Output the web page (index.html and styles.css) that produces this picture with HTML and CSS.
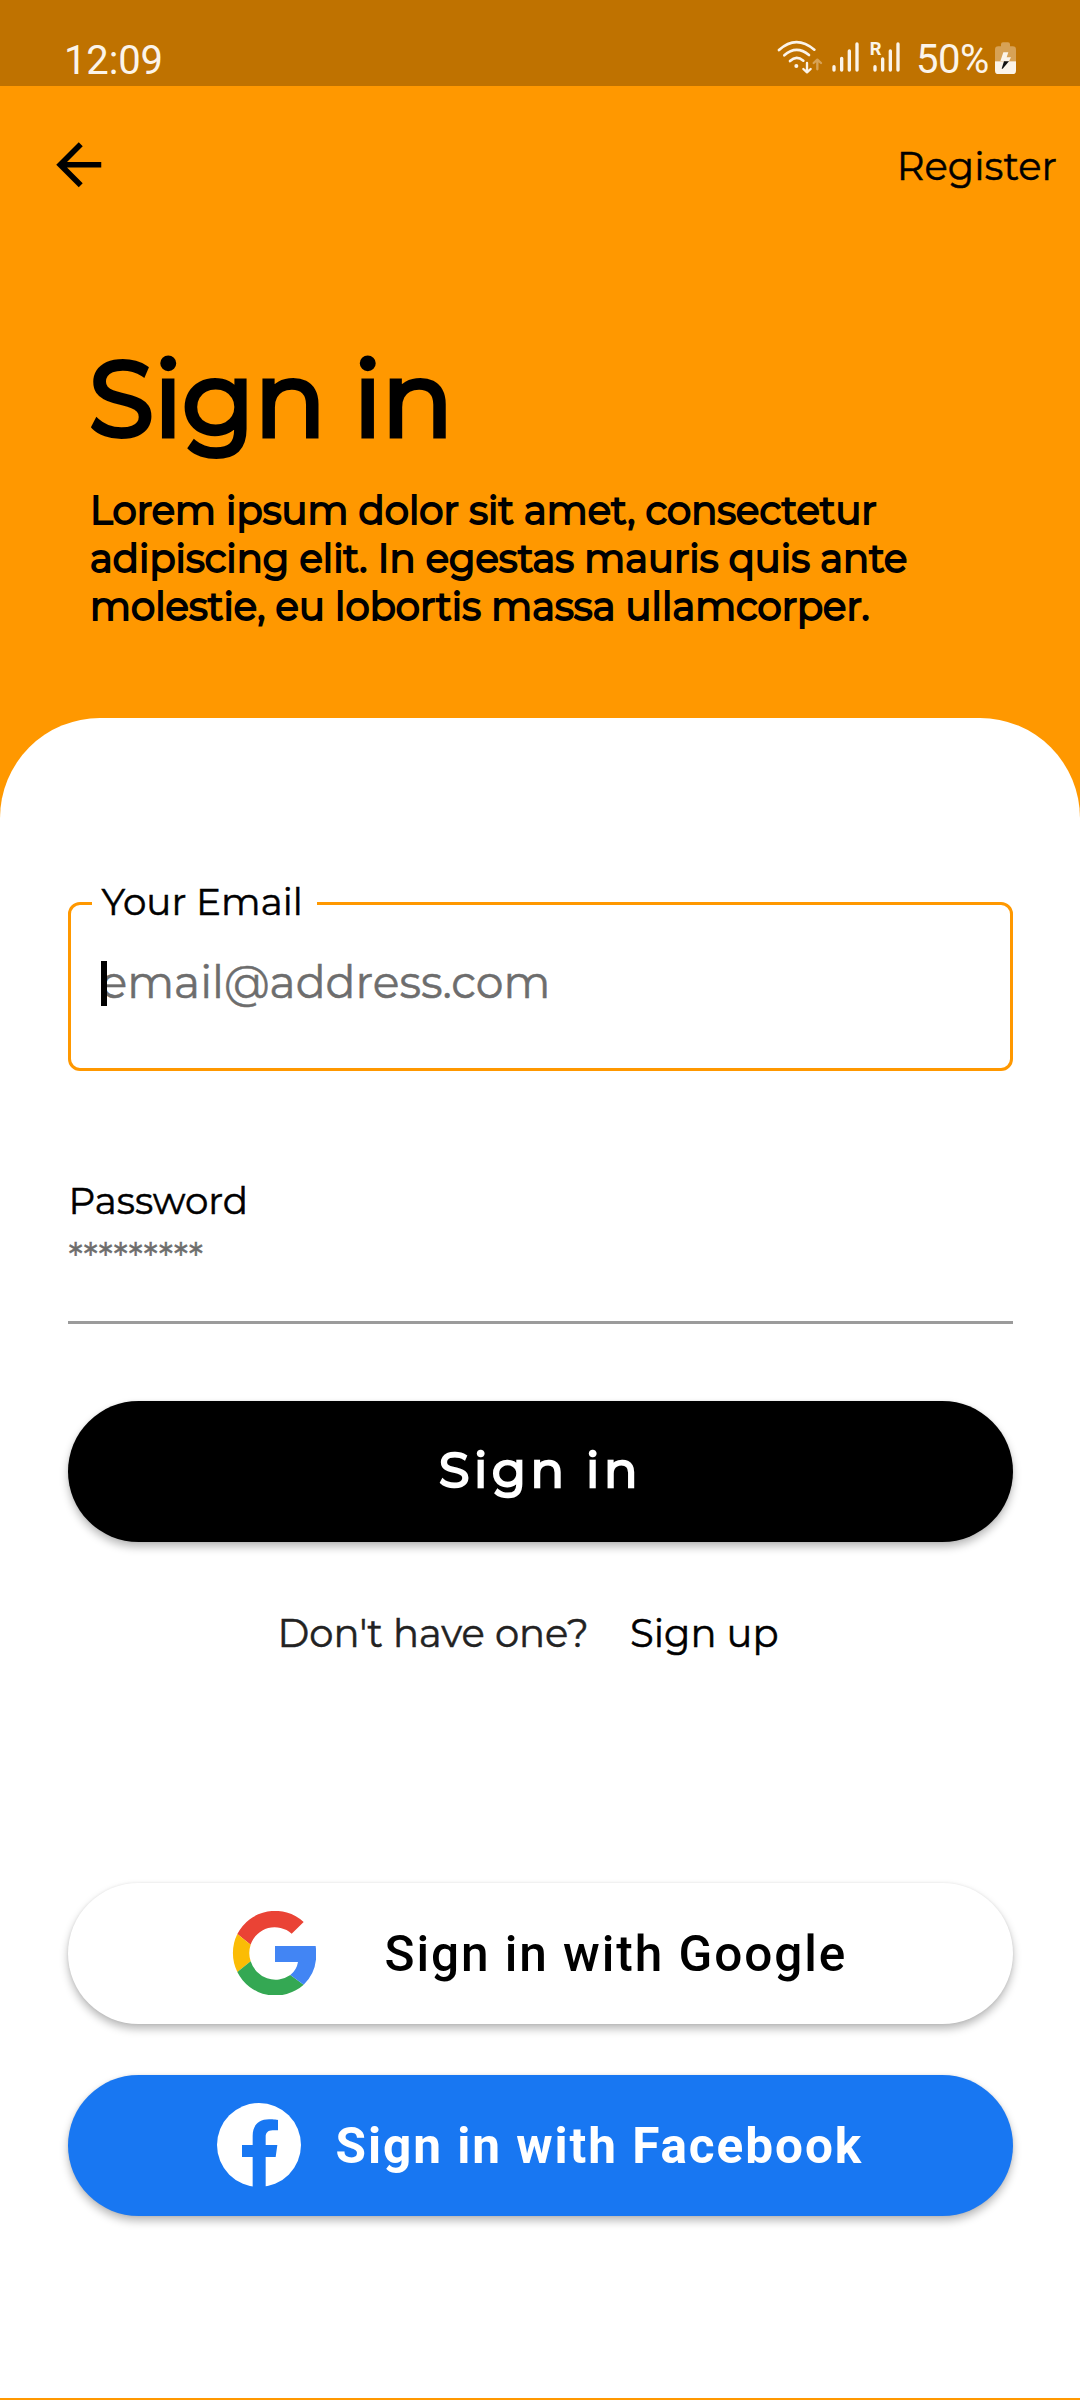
FILE: index.html
```html
<!DOCTYPE html>
<html lang="en">
<head>
<meta charset="utf-8">
<title>Sign in</title>
<link rel="stylesheet" href="styles.css">
</head>
<body>
<div class="status-bar">
  <span class="clock">12:09</span>
  <svg class="signals" viewBox="108 115 378 115" fill="none" stroke="#fbf4ea" stroke-linecap="round">
    <g stroke-width="8">
      <path d="M117 151Q168 104 223 150"/>
      <path d="M133 167Q169 135 207 166"/>
      <path d="M150 184Q169 166 190 183"/>
    </g>
    <circle cx="169" cy="199" r="6" fill="#fbf4ea" stroke="none"/>
    <path stroke-width="7" stroke-linejoin="round" d="M201 190V217M190 208L201 218L212 208"/>
    <path stroke="#d7a256" stroke-width="7" stroke-linejoin="round" d="M232 209V182M221 190L232 180L243 190"/>
    <g stroke-width="10">
      <path d="M282 201V211M305 176V211M328 154V211M351 133V211"/>
      <path d="M405 201V211M428 178V211M451 154V211M474 133V211"/>
    </g>
    <text class="roaming" x="389" y="167">R</text>
  </svg>
  <span class="level">50%</span>
  <svg class="battery" viewBox="765 125 63 96">
    <path fill="#d7a256" d="M783 138V132Q783 126 789 126H804Q810 126 810 132V138H818Q828 138 828 148V183H765V148Q765 138 775 138Z"/>
    <path fill="#fbf4ea" d="M765 183H828V211Q828 221 818 221H775Q765 221 765 211Z"/>
    <path fill="#fbf4ea" d="M790 156H805L800 171H813L807 183H781Z"/>
    <path fill="#111" d="M792 183H807L788 205H785Z"/>
  </svg>
</div>

<header class="hero">
  <nav class="nav">
    <svg class="back" viewBox="0 0 24 24"><path d="M20 11H7.83l5.59-5.59L12 4l-8 8 8 8 1.41-1.41L7.83 13H20v-2z"/></svg>
    <a class="register">Register</a>
  </nav>
  <h1 class="title">Sign in</h1>
  <p class="intro">
    Lorem ipsum dolor sit amet, consectetur<br>
    adipiscing elit. In egestas mauris quis ante<br>
    molestie, eu lobortis massa ullamcorper.
  </p>
</header>

<main class="sheet">
  <div class="email">
    <label class="email-label">Your Email</label>
    <span class="email-hint">email@address.com</span>
    <i class="caret"></i>
  </div>
  <div class="password">
    <label class="password-label">Password</label>
    <span class="password-hint">*********</span>
  </div>
  <div class="button primary">Sign in</div>
  <p class="signup"><span class="question">Don't have one?</span><a class="signup-link">Sign up</a></p>
  <div class="button google">
    <svg class="logo" viewBox="576 153 252 252">
      <path fill="#ea4335" d="M592 222A127 127 0 0 1 791 186L755 221A76 76 0 0 0 632 254Z"/>
      <path fill="#fbbc05" d="M592 222A129 129 0 0 0 592 336L632 304A78 78 0 0 1 632 254Z"/>
      <path fill="#34a853" d="M592 336A127 127 0 0 0 791 374L751 345A78 78 0 0 1 632 304Z"/>
      <path fill="#4285f4" d="M705 258H827Q837 330 791 374L751 345Q770 330 774 306H705Z"/>
    </svg>
    <span class="google-text">Sign in with Google</span>
  </div>
  <div class="button facebook">
    <svg class="logo" viewBox="531 729 252 252">
      <circle cx="657" cy="855" r="126" fill="#fff"/>
      <path fill="#1877f2" d="M638 982V891H606V855H638V828C638 795 657 778 687 778C701 778 714 780 714 780V811H698C683 811 677 820 677 830V855H712L707 891H677V982Z"/>
    </svg>
    <span class="facebook-text">Sign in with Facebook</span>
  </div>
</main>
</body>
</html>
```
FILE: styles.css
```css
* { box-sizing: border-box; }
body {
  margin: 0;
  width: 1080px;
  height: 2400px;
  overflow: hidden;
  background: #ff9800;
  color: #000;
  font-family: Montserrat, Inter, sans-serif;
  -webkit-text-stroke-width: 0.5px;
}
svg { display: block; flex: none; }

.status-bar {
  display: flex;
  align-items: flex-start;
  height: 86px;
  padding: 38px 64px 0;
  background: #bf7200;
  color: #fbf4ea;
  font: 40px/40px Roboto, sans-serif;
  -webkit-text-stroke-width: 0;
}
.clock { margin-top: 3px; letter-spacing: -0.16px; }
.signals { width: 126px; height: 38.33px; margin: 0.33px 14px 0 auto; }
.roaming { font: bold 55px Roboto, sans-serif; fill: #fbf4ea; stroke: none; }
.level { width: 79px; margin-top: 2px; letter-spacing: -0.48px; }
.battery { width: 21px; height: 32px; margin-top: 3.67px; }

.hero { height: 632px; }
.nav {
  display: flex;
  align-items: center;
  justify-content: space-between;
  height: 158px;
  padding: 0 23px 0 45px;
}
.back { width: 67.5px; height: 67.5px; }
.register { margin-top: 3px; font-size: 38.5px; line-height: 48px; }
.title {
  margin: 94px 0 0 89px;
  font-size: 105.5px;
  font-weight: 400;
  line-height: 120px;
  -webkit-text-stroke-width: 5px;
}
.intro {
  margin: 29px 0 0 90px;
  font-size: 38.5px;
  line-height: 48px;
  letter-spacing: 0.07px;
  white-space: nowrap;
  -webkit-text-stroke-width: 1.9px;
}

.sheet {
  height: 1680px;
  padding: 184px 67.5px 0;
  border-radius: 100px 100px 0 0;
  background: #fff;
}
.email {
  position: relative;
  height: 169px;
  padding: 51px 0 0 30px;
  border: 3px solid #ff9800;
  border-radius: 12px;
}
.email-label {
  position: absolute;
  left: 21px;
  top: -23px;
  width: 225px;
  padding-left: 10px;
  background: #fff;
  font-size: 37.3px;
  line-height: 40px;
  white-space: nowrap;
}
.email-hint {
  display: block;
  color: #6d6d6d;
  font-size: 44.2px;
  line-height: 52px;
}
.caret {
  position: absolute;
  left: 30px;
  top: 56px;
  width: 6px;
  height: 45px;
  background: #000;
}
.password {
  display: flex;
  flex-direction: column;
  height: 144px;
  margin-top: 109px;
  border-bottom: 3px solid #9b9b9b;
}
.password-label { margin-top: 1px; padding-left: 1px; font-size: 37.3px; line-height: 40px; }
.password-hint { margin-top: 14px; padding-left: 1px; color: #6d6d6d; font-size: 37px; line-height: 44px; }

.button {
  display: flex;
  align-items: center;
  height: 141px;
  border-radius: 70.5px;
  box-shadow: 0 5px 8px rgba(0, 0, 0, 0.27), 0 0 3px rgba(0, 0, 0, 0.08);
}
.primary {
  justify-content: center;
  margin-top: 77px;
  padding: 0 0 5px 1px;
  background: #000;
  color: #fff;
  font-size: 49.5px;
  letter-spacing: 4.6px;
  -webkit-text-stroke-width: 2.6px;
}
.signup {
  display: flex;
  margin: 68px 0 0 210px;
  font-size: 38.5px;
  line-height: 48px;
}
.question { width: 352.5px; color: #222; }
.google, .facebook { font: 500 49.5px/58px Roboto, sans-serif; -webkit-text-stroke-width: 0; }
.google {
  gap: 69px;
  margin-top: 225px;
  padding: 0 0 1px 164px;
  background: #fff;
  letter-spacing: 1.95px;
}
.facebook {
  gap: 35px;
  margin-top: 51px;
  padding: 0 0 1px 149px;
  background: #1877f2;
  color: #fff;
  font-weight: 700;
  letter-spacing: 1.95px;
}
.logo { width: 84px; height: 84px; }
.google-text { padding-top: 1px; }
.facebook-text { padding-top: 1px; }
```
